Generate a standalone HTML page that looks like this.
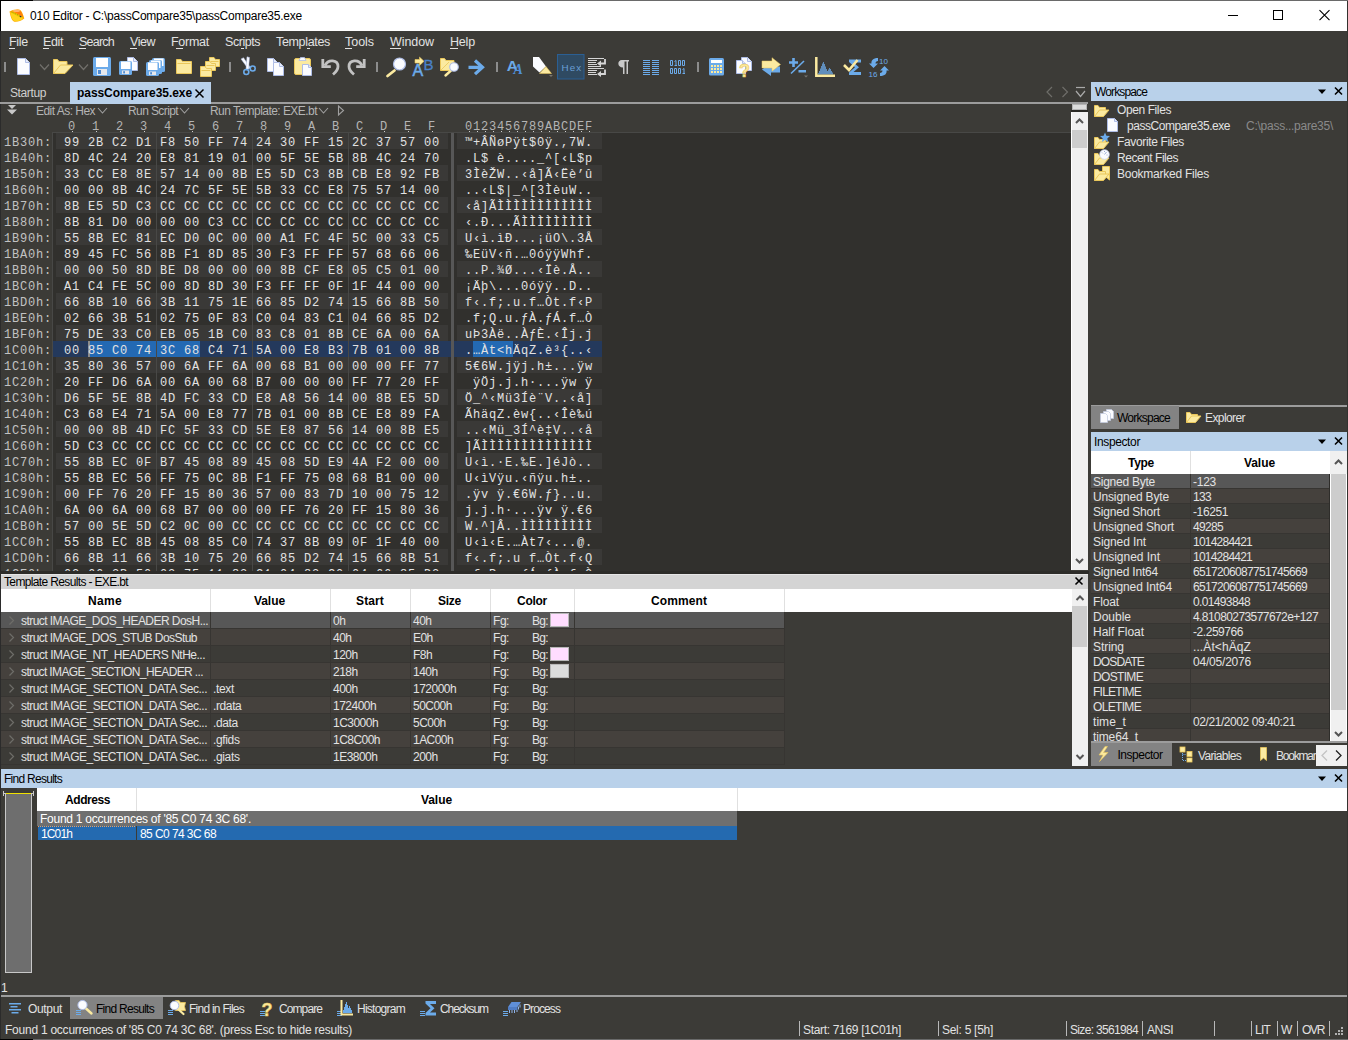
<!DOCTYPE html>
<html><head><meta charset="utf-8"><title>010 Editor</title><style>
html,body{margin:0;padding:0}
body{width:1348px;height:1040px;background:#3c3b37;position:relative;overflow:hidden;font-family:"Liberation Sans",sans-serif;font-size:12px}
div,span.t,svg{position:absolute}
div{box-sizing:border-box}
.t{white-space:pre;line-height:16px;height:16px}
.b{font-weight:bold}
.m{font-family:"Liberation Mono",monospace}
.f{font-family:"Liberation Serif",serif}
.clip{overflow:hidden}
</style></head><body>
<div style="left:0px;top:0px;width:1348px;height:1px;background:#6a6a6a;"></div>
<div style="left:0px;top:0px;width:33px;height:1px;background:#000;"></div>
<div style="left:1px;top:1px;width:1346px;height:30px;background:#fff;"></div>
<div style="left:0px;top:1px;width:1px;height:30px;background:#000;"></div>
<div style="left:0px;top:31px;width:1px;height:1009px;background:#2b2b2b;"></div>
<div style="left:1347px;top:1px;width:1px;height:1039px;background:#33322f;"></div>
<div style="left:0px;top:1039px;width:1348px;height:1px;background:#6a6a6a;"></div>
<div style="left:0px;top:1039px;width:33px;height:1px;background:#000;"></div>
<span class="t" style="left:30px;top:8px;color:#000;letter-spacing:-0.230px;">010 Editor - C:\passCompare35\passCompare35.exe</span>
<svg style="left:1220px;top:5px" width="120" height="22" viewBox="0 0 120 22"><g stroke="#000" stroke-width="1" fill="none" shape-rendering="crispEdges"><path d="M8 10.5H18"/><rect x="53.5" y="5.5" width="9" height="9"/></g><path d="M99.500 5.200l10 10M109.500 5.200l-10 10" stroke="#000" stroke-width="1.1" fill="none"/></svg>
<span class="t" style="left:9px;top:34px;color:#e2e2e2;font-size:12.5px;letter-spacing:-0.289px;">File</span>
<span class="t" style="left:43px;top:34px;color:#e2e2e2;font-size:12.5px;letter-spacing:-0.387px;">Edit</span>
<span class="t" style="left:79px;top:34px;color:#e2e2e2;font-size:12.5px;letter-spacing:-0.768px;">Search</span>
<span class="t" style="left:130px;top:34px;color:#e2e2e2;font-size:12.5px;letter-spacing:-0.469px;">View</span>
<span class="t" style="left:171px;top:34px;color:#e2e2e2;font-size:12.5px;letter-spacing:-0.266px;">Format</span>
<span class="t" style="left:225px;top:34px;color:#e2e2e2;font-size:12.5px;letter-spacing:-0.458px;">Scripts</span>
<span class="t" style="left:276px;top:34px;color:#e2e2e2;font-size:12.5px;letter-spacing:-0.332px;">Templates</span>
<span class="t" style="left:345px;top:34px;color:#e2e2e2;font-size:12.5px;letter-spacing:-0.037px;">Tools</span>
<span class="t" style="left:390px;top:34px;color:#e2e2e2;font-size:12.5px;letter-spacing:-0.078px;">Window</span>
<span class="t" style="left:450px;top:34px;color:#e2e2e2;font-size:12.5px;letter-spacing:-0.180px;">Help</span>
<div style="left:9px;top:48px;width:6px;height:1px;background:#e2e2e2;"></div>
<div style="left:43px;top:48px;width:6px;height:1px;background:#e2e2e2;"></div>
<div style="left:79px;top:48px;width:7px;height:1px;background:#e2e2e2;"></div>
<div style="left:130px;top:48px;width:7px;height:1px;background:#e2e2e2;"></div>
<div style="left:176px;top:48px;width:7px;height:1px;background:#e2e2e2;"></div>
<div style="left:241px;top:48px;width:3px;height:1px;background:#e2e2e2;"></div>
<div style="left:307px;top:48px;width:3px;height:1px;background:#e2e2e2;"></div>
<div style="left:345px;top:48px;width:7px;height:1px;background:#e2e2e2;"></div>
<div style="left:390px;top:48px;width:11px;height:1px;background:#e2e2e2;"></div>
<div style="left:450px;top:48px;width:8px;height:1px;background:#e2e2e2;"></div>
<svg style="left:0;top:52px" width="900" height="30" viewBox="0 52 900 30"><rect x="4" y="62" width="2" height="10" fill="#8c8c8c"/><path d="M17.5 58.5h8l4 4v12h-12z" fill="#fbfcff" stroke="#aebde6"/><path d="M25.5 58.5v4h4" fill="#e6ebfa" stroke="#aebde6"/><path d="M40 64.5l4.5 5 4.5-5" fill="none" stroke="#716f6b" stroke-width="1.2"/><path d="M53.5 73.5v-14h4l1.5 2h8v4" fill="#fbeaa0" stroke="#eac75a"/><path d="M53.5 73.5l7-8.5h12.5l-8 8.5z" fill="#fbeaa0" stroke="#eac75a"/><path d="M79 64.5l4.5 5 4.5-5" fill="none" stroke="#716f6b" stroke-width="1.2"/><rect x="93" y="57" width="18" height="19" rx="1.5" fill="#6cabea"/><rect x="96" y="58" width="12" height="9" fill="#fff"/><rect x="97" y="69" width="10" height="6" fill="#e6e8ec"/><rect x="98" y="70" width="3" height="4" fill="#4e8ad0"/><path d="M127.5 57.5h6l4 4v9h-10z" fill="#fbfcff" stroke="#aebde6"/><path d="M133.5 57.5v4h4" fill="#e6ebfa" stroke="#aebde6"/><rect x="119" y="61" width="13" height="14" rx="1.5" fill="#6cabea"/><rect x="121" y="61.5" width="9.5" height="7.5" fill="#fff"/><rect x="122" y="70.5" width="7" height="3.5" fill="#e6e8ec"/><rect x="123.2" y="71.2" width="1.8" height="2.200" fill="#4e8ad0"/><rect x="152" y="58" width="13" height="14" rx="1.5" fill="#6cabea"/><rect x="154" y="58.5" width="9.5" height="7.5" fill="#fff"/><rect x="149" y="60" width="13" height="14" rx="1.5" fill="#6cabea"/><rect x="151" y="60.5" width="9.5" height="7.5" fill="#fff"/><rect x="146" y="62" width="13" height="14" rx="1.5" fill="#6cabea"/><rect x="148" y="62.5" width="9.5" height="7.5" fill="#fff"/><rect x="149" y="71.5" width="7" height="3.5" fill="#e6e8ec"/><rect x="150.2" y="72.2" width="1.8" height="2.200" fill="#4e8ad0"/><path d="M176.5 59.5h4.5l1.5 2h9v12h-15z" fill="#fbeaa0" stroke="#eac75a"/><path d="M177.5 63.5h13" stroke="#eac75a" fill="none"/><path d="M209.5 57.5h4.5l1.5 2h4v7h-10z" fill="#fbeaa0" stroke="#eac75a"/><path d="M210.5 61.5h8" stroke="#eac75a" fill="none"/><path d="M205.5 61.5h4.5l1.5 2h4v7h-10z" fill="#fbeaa0" stroke="#eac75a"/><path d="M206.5 65.5h8" stroke="#eac75a" fill="none"/><path d="M200.5 66.5h4.5l1.5 2h5v8h-11z" fill="#fbeaa0" stroke="#eac75a"/><path d="M201.5 70.5h9" stroke="#eac75a" fill="none"/><rect x="229" y="62" width="2" height="10" fill="#8c8c8c"/><path d="M248 68l-1.5 2.200M249.5 67.5l1.5.6" stroke="#6cabea" stroke-width="1.6" fill="none"/><path d="M241 59l2.5-1.3 7 10-2 1.5z" fill="#fbfcff" stroke="#aebde6" stroke-width=".5"/><path d="M247 56.8l2.5.700-1 11.5-2.5 0z" fill="#fbfcff" stroke="#aebde6" stroke-width=".5"/><circle cx="246.3" cy="72" r="2.5" fill="none" stroke="#6cabea" stroke-width="1.6"/><circle cx="252.700" cy="68.5" r="2.5" fill="none" stroke="#6cabea" stroke-width="1.6"/><path d="M267.5 58.5h6l4 4v9h-10z" fill="#fbfcff" stroke="#aebde6"/><path d="M273.5 58.5v4h4" fill="#e6ebfa" stroke="#aebde6"/><path d="M273.5 62.5h6l4 4v9h-10z" fill="#fbfcff" stroke="#aebde6"/><path d="M279.5 62.5v4h4" fill="#e6ebfa" stroke="#aebde6"/><rect x="294.5" y="58.5" width="16" height="16" rx="1.5" fill="#fbeaa0" stroke="#eac75a"/><path d="M299 60.5l1.5-3h4l1.5 3z" fill="#fbfcff" stroke="#aebde6" stroke-width=".8"/><path d="M302.5 64.5h6l3 3v8h-9z" fill="#fbfcff" stroke="#aebde6"/><path d="M308.5 64.5v3h3" fill="#e6ebfa" stroke="#aebde6"/><g transform="translate(321 58)"><path d="M1.8 1v7.700h8" fill="none" stroke="#c2c2c2" stroke-width="2.8"/><path d="M4 7.5c3.5-7 13-5.5 13 1 0 3-2 5.5-5 8" fill="none" stroke="#c2c2c2" stroke-width="2.8"/></g><g transform="translate(366 58) scale(-1 1)"><path d="M1.8 1v7.700h8" fill="none" stroke="#c2c2c2" stroke-width="2.8"/><path d="M4 7.5c3.5-7 13-5.5 13 1 0 3-2 5.5-5 8" fill="none" stroke="#c2c2c2" stroke-width="2.8"/></g><rect x="376" y="62" width="2" height="10" fill="#8c8c8c"/><path d="M394.5 70.5l-7 5.5" stroke="#fbeaa0" stroke-width="2.8" stroke-linecap="round"/><circle cx="399.5" cy="64" r="6" fill="#fbfcff" stroke="#aebde6" stroke-width="1.2"/><text x="412.5" y="76" font-family="Liberation Sans" font-size="16" fill="#6cabea" stroke="#6cabea" stroke-width=".5">A</text><text x="423.5" y="70" font-family="Liberation Sans" font-size="15" fill="#4a82c8" stroke="#4a82c8" stroke-width=".3">B</text><path d="M415 59.5h4.5v-2.5l4.5 4.3-4.5 4.200v-2.5h-4.5z" fill="#fbeaa0" stroke="#eac75a" stroke-width=".6"/><path d="M440.5 70.5v-12h4l1.5 2h8v10z" fill="#fbeaa0" stroke="#eac75a"/><path d="M441 70l8-8" stroke="#eac75a" stroke-width=".8"/><path d="M451 70.5l-5.5 5" stroke="#fbeaa0" stroke-width="2.400" stroke-linecap="round"/><circle cx="454" cy="67" r="4.3" fill="#fbfcff" stroke="#aebde6" stroke-width="1.1"/><path d="M468.5 67.3h13M475 60.5l7.5 6.8-7.5 6.8" fill="none" stroke="#6cabea" stroke-width="3.200" stroke-linejoin="miter"/><rect x="496" y="62" width="2" height="10" fill="#8c8c8c"/><text x="506.8" y="71" font-family="Liberation Sans" font-weight="bold" font-size="15.5" fill="#6cabea">A</text><text x="513.5" y="74" font-family="Liberation Serif" font-style="italic" font-weight="bold" font-size="14" fill="#4f8fd8">A</text><path d="M533 57h6l7 9.5-6.5 6-6.5-6z" fill="#fbfcff"/><path d="M546 66.5l5.5 7h-12z" fill="#fbeaa0" stroke="#eac75a" stroke-width=".5"/><path d="M549 75h4l-2 2z" fill="#77756f"/><rect x="557.5" y="54.5" width="26.5" height="24.5" fill="#2f4a62" stroke="#2b5f93"/><text x="561.5" y="71" font-family="Liberation Sans" font-size="9.8" letter-spacing="1.100" fill="#6a9fd4">Hex</text><path d="M588 58.5H604M588 60.5H597M588 62.5H596M588 64.5H597M588 66.5H601M588 68.5H604M588 70.5H597M588 72.5H596M588 74.5H597" stroke="#d6d6d6" stroke-width="1" fill="none"/><path d="M605 59v4.5h-5M605 69.5v4.5h-5" stroke="#d6d6d6" stroke-width="1.8" fill="none"/><path d="M597 63.5l4-3v6zM597 74l4-3v6z" fill="#d6d6d6"/><path d="M622 60h7v1.5h-1v12.5h-1.5v-12.5h-2v12.5h-1.5v-6.5c-6 0-6-7.5-1-7.5z" fill="#c9c9c9"/><path d="M643 60.5h7M652 60.5h7M643 62.5h7M652 62.5h7M643 64.5h7M652 64.5h7M643 66.5h7M652 66.5h7M643 68.5h7M652 68.5h7M643 70.5h7M652 70.5h7M643 72.5h7M652 72.5h7M643 74.5h7M652 74.5h7" stroke="#6cabea" stroke-width="1" fill="none" shape-rendering="crispEdges"/><path d="M670.5 60.5h2v5h-2zM674.5 61.5l1.5-1v5.5M674.5 65.5h2.5M678.5 60.5h2v5h-2zM682.5 60.5h2v5h-2zM670.5 68.5h2v5h-2zM674.5 68.5h2v5h-2zM678.5 68.5h2v5h-2zM682.5 69.5l1.5-1v5.5M682.5 73.5h2.5" fill="none" stroke="#6cabea" stroke-width="1"/><rect x="697" y="62" width="2" height="10" fill="#8c8c8c"/><rect x="709" y="58" width="15" height="17.5" rx="1.5" fill="#6cabea"/><rect x="711" y="60" width="11" height="3" fill="#fff"/><rect x="711" y="65" width="2" height="2" fill="#fbeaa0"/><rect x="714" y="65" width="2" height="2" fill="#fbeaa0"/><rect x="717" y="65" width="2" height="2" fill="#fbeaa0"/><rect x="720" y="65" width="2" height="2" fill="#fbeaa0"/><rect x="711" y="68" width="2" height="2" fill="#fbeaa0"/><rect x="714" y="68" width="2" height="2" fill="#fbeaa0"/><rect x="717" y="68" width="2" height="2" fill="#fbeaa0"/><rect x="720" y="68" width="2" height="2" fill="#fbeaa0"/><rect x="711" y="71" width="2" height="2" fill="#fbeaa0"/><rect x="714" y="71" width="2" height="2" fill="#fbeaa0"/><rect x="717" y="71" width="2" height="2" fill="#fbeaa0"/><rect x="720" y="71" width="2" height="2" fill="#fbeaa0"/><path d="M741.5 57.5h6l4 4v9h-10z" fill="#fbfcff" stroke="#aebde6"/><path d="M747.5 57.5v4h4" fill="#e6ebfa" stroke="#aebde6"/><path d="M736.5 60.5h6l3 3v10h-9z" fill="#fbfcff" stroke="#aebde6"/><path d="M742.5 60.5v3h3" fill="#e6ebfa" stroke="#aebde6"/><text x="739" y="77" font-family="Liberation Sans" font-weight="bold" font-size="18" fill="#fbeaa0" stroke="#eac75a" stroke-width=".6">?</text><path d="M780 66.5h-9v-3.5l-9 6.5 9 6.5v-3.5h9z" fill="#6cabea"/><path d="M762 61h10v-3.3l8.5 6.8-8.5 6.8v-3.3h-10z" fill="#fbeaa0" stroke="#eac75a" stroke-width=".5"/><path d="M789 62.5h9M793.5 58v9M798.5 71.3h7.5" stroke="#6cabea" stroke-width="2.6" fill="none"/><path d="M791 73.5l13-12.5" stroke="#6cabea" stroke-width="1.6" fill="none"/><path d="M804 75.5h4l-2 2z" fill="#77756f"/><path d="M818.5 74.5V73M819.5 74.5V71M820.5 74.5V68.5M821.5 74.5V66M822.5 74.5V63.5M823.5 74.5V62M824.5 74.5V64M825.5 74.5V66.5M826.5 74.5V69M827.5 74.5V71M828.5 74.5V69.5M829.5 74.5V68M830.5 74.5V69M831.5 74.5V71M832.5 74.5V72.5" stroke="#6cabea" stroke-width=".75" fill="none"/><path d="M816.3 57v18.700H835" fill="none" stroke="#fbeaa0" stroke-width="2.5"/><path d="M849 59.5h12v3h-7.5l5.5 4.8-5.5 4.700h7.5v3h-12v-2.5l6-5.200-6-5.3z" fill="#6cabea"/><path d="M844 65l5 5 8.5-10" fill="none" stroke="#fbeaa0" stroke-width="2.6"/><path d="M878 58c-5 0-7 2.5-6.5 5.5h-2.5l4.5 4.5 4.5-4.5h-2.5c0-1.5 1-2.5 2.5-2.5z" fill="#6cabea"/><path d="M880 76c5 0 7-2.5 6.5-5.5h2.5l-4.5-4.5-4.5 4.5h2.5c0 1.5-1 2.5-2.5 2.5z" fill="#6cabea"/><text x="879" y="63.5" font-family="Liberation Sans" font-size="8" fill="#6cabea">10</text><text x="868.5" y="76.5" font-family="Liberation Sans" font-size="8" fill="#6cabea">16</text></svg>
<span class="t" style="left:10px;top:85px;color:#d0d0d0;letter-spacing:-0.386px;">Startup</span>
<div style="left:0px;top:102px;width:1088px;height:2px;background:#9c9c9c;"></div>
<div style="left:70px;top:82px;width:141px;height:22px;background:#b9d1ea;"></div>
<span class="t b" style="left:77px;top:85px;color:#000;letter-spacing:-0.063px;">passCompare35.exe</span>
<svg style="left:194px;top:88px" width="11" height="11"><path d="M1.5 1.5l8 8M9.5 1.5l-8 8" stroke="#000" stroke-width="1.5" fill="none"/></svg>
<svg style="left:1042px;top:84px" width="48" height="16" fill="none" stroke="#6e6d69" stroke-width="1.2"><path d="M10 3L5 8l5 5"/><path d="M20.500 3l5 5-5 5"/><path d="M34 3.5h9" stroke="#a9a9a9"/><path d="M34 7l4.5 5.5L43 7" stroke="#a9a9a9"/></svg>
<svg style="left:7px;top:105px" width="10" height="10" fill="#c8c8c8"><path d="M1 0h8L5 4zM0 4.5h10L5 9.5z"/></svg>
<span class="t" style="left:36px;top:103px;color:#b4b4b4;letter-spacing:-0.531px;">Edit As: Hex</span>
<span class="t" style="left:128px;top:103px;color:#b4b4b4;letter-spacing:-0.603px;">Run Script</span>
<span class="t" style="left:210px;top:103px;color:#b4b4b4;letter-spacing:-0.542px;">Run Template: EXE.bt</span>
<svg style="left:97px;top:105px" width="250" height="12" fill="none" stroke="#a0a0a0" stroke-width="1.1"><path d="M1 3l4.5 5L10 3"/><path d="M83 3l4.5 5L92 3"/><path d="M222 3l4.5 5L231 3"/><path d="M241.5 1v9l5-4.5z"/></svg>
<div style="left:52px;top:132px;width:1019px;height:1px;background:#484846;"></div>
<div style="left:52px;top:132px;width:1px;height:439px;background:#484846;"></div>
<div style="left:53px;top:133px;width:1018px;height:438px;background:#31302d;"></div>
<div style="left:56px;top:133px;width:392px;height:16px;background:#3a3937;"></div>
<div style="left:457px;top:133px;width:145px;height:16px;background:#3a3937;"></div>
<div style="left:56px;top:165px;width:392px;height:16px;background:#3a3937;"></div>
<div style="left:457px;top:165px;width:145px;height:16px;background:#3a3937;"></div>
<div style="left:56px;top:197px;width:392px;height:16px;background:#3a3937;"></div>
<div style="left:457px;top:197px;width:145px;height:16px;background:#3a3937;"></div>
<div style="left:56px;top:229px;width:392px;height:16px;background:#3a3937;"></div>
<div style="left:457px;top:229px;width:145px;height:16px;background:#3a3937;"></div>
<div style="left:56px;top:261px;width:392px;height:16px;background:#3a3937;"></div>
<div style="left:457px;top:261px;width:145px;height:16px;background:#3a3937;"></div>
<div style="left:56px;top:293px;width:392px;height:16px;background:#3a3937;"></div>
<div style="left:457px;top:293px;width:145px;height:16px;background:#3a3937;"></div>
<div style="left:56px;top:325px;width:392px;height:16px;background:#3a3937;"></div>
<div style="left:457px;top:325px;width:145px;height:16px;background:#3a3937;"></div>
<div style="left:53px;top:341px;width:398px;height:16px;background:#24395c;"></div>
<div style="left:454px;top:341px;width:148px;height:16px;background:#24395c;"></div>
<div style="left:88px;top:341px;width:112px;height:16px;background:#2369b3;"></div>
<div style="left:473px;top:341px;width:40px;height:16px;background:#2369b3;"></div>
<div style="left:88px;top:341px;width:2px;height:16px;background:#8c8c8c;"></div>
<div style="left:56px;top:357px;width:392px;height:16px;background:#3a3937;"></div>
<div style="left:457px;top:357px;width:145px;height:16px;background:#3a3937;"></div>
<div style="left:56px;top:389px;width:392px;height:16px;background:#3a3937;"></div>
<div style="left:457px;top:389px;width:145px;height:16px;background:#3a3937;"></div>
<div style="left:56px;top:421px;width:392px;height:16px;background:#3a3937;"></div>
<div style="left:457px;top:421px;width:145px;height:16px;background:#3a3937;"></div>
<div style="left:56px;top:453px;width:392px;height:16px;background:#3a3937;"></div>
<div style="left:457px;top:453px;width:145px;height:16px;background:#3a3937;"></div>
<div style="left:56px;top:485px;width:392px;height:16px;background:#3a3937;"></div>
<div style="left:457px;top:485px;width:145px;height:16px;background:#3a3937;"></div>
<div style="left:56px;top:517px;width:392px;height:16px;background:#3a3937;"></div>
<div style="left:457px;top:517px;width:145px;height:16px;background:#3a3937;"></div>
<div style="left:56px;top:549px;width:392px;height:16px;background:#3a3937;"></div>
<div style="left:457px;top:549px;width:145px;height:16px;background:#3a3937;"></div>
<div style="left:156px;top:133px;width:1px;height:438px;background:#484846;"></div>
<div style="left:252px;top:133px;width:1px;height:438px;background:#484846;"></div>
<div style="left:348px;top:133px;width:1px;height:438px;background:#484846;"></div>
<div style="left:451px;top:133px;width:3px;height:438px;background:#575757;"></div>
<span class="t m" style="left:68px;top:119.3px;color:#b4b4b4;letter-spacing:0.800px;">0</span>
<div style="left:72px;top:131px;width:1px;height:1px;background:#d0d0d0;"></div>
<div style="left:469px;top:131px;width:1px;height:1px;background:#d0d0d0;"></div>
<span class="t m" style="left:92px;top:119.3px;color:#b4b4b4;letter-spacing:0.800px;">1</span>
<div style="left:96px;top:131px;width:1px;height:1px;background:#d0d0d0;"></div>
<div style="left:477px;top:131px;width:1px;height:1px;background:#d0d0d0;"></div>
<span class="t m" style="left:116px;top:119.3px;color:#b4b4b4;letter-spacing:0.800px;">2</span>
<div style="left:120px;top:131px;width:1px;height:1px;background:#d0d0d0;"></div>
<div style="left:485px;top:131px;width:1px;height:1px;background:#d0d0d0;"></div>
<span class="t m" style="left:140px;top:119.3px;color:#b4b4b4;letter-spacing:0.800px;">3</span>
<div style="left:144px;top:131px;width:1px;height:1px;background:#d0d0d0;"></div>
<div style="left:493px;top:131px;width:1px;height:1px;background:#d0d0d0;"></div>
<span class="t m" style="left:164px;top:119.3px;color:#b4b4b4;letter-spacing:0.800px;">4</span>
<div style="left:168px;top:131px;width:1px;height:1px;background:#d0d0d0;"></div>
<div style="left:501px;top:131px;width:1px;height:1px;background:#d0d0d0;"></div>
<span class="t m" style="left:188px;top:119.3px;color:#b4b4b4;letter-spacing:0.800px;">5</span>
<div style="left:192px;top:131px;width:1px;height:1px;background:#d0d0d0;"></div>
<div style="left:509px;top:131px;width:1px;height:1px;background:#d0d0d0;"></div>
<span class="t m" style="left:212px;top:119.3px;color:#b4b4b4;letter-spacing:0.800px;">6</span>
<div style="left:216px;top:131px;width:1px;height:1px;background:#d0d0d0;"></div>
<div style="left:517px;top:131px;width:1px;height:1px;background:#d0d0d0;"></div>
<span class="t m" style="left:236px;top:119.3px;color:#b4b4b4;letter-spacing:0.800px;">7</span>
<div style="left:240px;top:131px;width:1px;height:1px;background:#d0d0d0;"></div>
<div style="left:525px;top:131px;width:1px;height:1px;background:#d0d0d0;"></div>
<span class="t m" style="left:260px;top:119.3px;color:#b4b4b4;letter-spacing:0.800px;">8</span>
<div style="left:264px;top:131px;width:1px;height:1px;background:#d0d0d0;"></div>
<div style="left:533px;top:131px;width:1px;height:1px;background:#d0d0d0;"></div>
<span class="t m" style="left:284px;top:119.3px;color:#b4b4b4;letter-spacing:0.800px;">9</span>
<div style="left:288px;top:131px;width:1px;height:1px;background:#d0d0d0;"></div>
<div style="left:541px;top:131px;width:1px;height:1px;background:#d0d0d0;"></div>
<span class="t m" style="left:308px;top:119.3px;color:#b4b4b4;letter-spacing:0.800px;">A</span>
<div style="left:312px;top:131px;width:1px;height:1px;background:#d0d0d0;"></div>
<div style="left:549px;top:131px;width:1px;height:1px;background:#d0d0d0;"></div>
<span class="t m" style="left:332px;top:119.3px;color:#b4b4b4;letter-spacing:0.800px;">B</span>
<div style="left:336px;top:131px;width:1px;height:1px;background:#d0d0d0;"></div>
<div style="left:557px;top:131px;width:1px;height:1px;background:#d0d0d0;"></div>
<span class="t m" style="left:356px;top:119.3px;color:#b4b4b4;letter-spacing:0.800px;">C</span>
<div style="left:360px;top:131px;width:1px;height:1px;background:#d0d0d0;"></div>
<div style="left:565px;top:131px;width:1px;height:1px;background:#d0d0d0;"></div>
<span class="t m" style="left:380px;top:119.3px;color:#b4b4b4;letter-spacing:0.800px;">D</span>
<div style="left:384px;top:131px;width:1px;height:1px;background:#d0d0d0;"></div>
<div style="left:573px;top:131px;width:1px;height:1px;background:#d0d0d0;"></div>
<span class="t m" style="left:404px;top:119.3px;color:#b4b4b4;letter-spacing:0.800px;">E</span>
<div style="left:408px;top:131px;width:1px;height:1px;background:#d0d0d0;"></div>
<div style="left:581px;top:131px;width:1px;height:1px;background:#d0d0d0;"></div>
<span class="t m" style="left:428px;top:119.3px;color:#b4b4b4;letter-spacing:0.800px;">F</span>
<div style="left:432px;top:131px;width:1px;height:1px;background:#d0d0d0;"></div>
<div style="left:589px;top:131px;width:1px;height:1px;background:#d0d0d0;"></div>
<span class="t m" style="left:465px;top:119.3px;color:#b4b4b4;letter-spacing:0.800px;">0123456789ABCDEF</span>
<div class="clip" style="left:0;top:133px;width:1071px;height:438px">
<span class="t m" style="left:4px;top:1.5999999999999996px;color:#c2c2c2;letter-spacing:0.800px;">1B30h:</span>
<span class="t m" style="left:64px;top:1.5999999999999996px;color:#e2e2e2;letter-spacing:0.800px;">99 2B C2 D1 F8 50 FF 74 24 30 FF 15 2C 37 57 00</span>
<span class="t m" style="left:465px;top:1.5999999999999996px;color:#e2e2e2;letter-spacing:0.800px;">™+ÂÑøPÿt$0ÿ.,7W.</span>
<span class="t m" style="left:4px;top:17.6px;color:#c2c2c2;letter-spacing:0.800px;">1B40h:</span>
<span class="t m" style="left:64px;top:17.6px;color:#e2e2e2;letter-spacing:0.800px;">8D 4C 24 20 E8 81 19 01 00 5F 5E 5B 8B 4C 24 70</span>
<span class="t m" style="left:465px;top:17.6px;color:#e2e2e2;letter-spacing:0.800px;">.L$ è...._^[‹L$p</span>
<span class="t m" style="left:4px;top:33.6px;color:#c2c2c2;letter-spacing:0.800px;">1B50h:</span>
<span class="t m" style="left:64px;top:33.6px;color:#e2e2e2;letter-spacing:0.800px;">33 CC E8 8E 57 14 00 8B E5 5D C3 8B CB E8 92 FB</span>
<span class="t m" style="left:465px;top:33.6px;color:#e2e2e2;letter-spacing:0.800px;">3ÌèŽW..‹å]Ã‹Ëè’û</span>
<span class="t m" style="left:4px;top:49.6px;color:#c2c2c2;letter-spacing:0.800px;">1B60h:</span>
<span class="t m" style="left:64px;top:49.6px;color:#e2e2e2;letter-spacing:0.800px;">00 00 8B 4C 24 7C 5F 5E 5B 33 CC E8 75 57 14 00</span>
<span class="t m" style="left:465px;top:49.6px;color:#e2e2e2;letter-spacing:0.800px;">..‹L$|_^[3ÌèuW..</span>
<span class="t m" style="left:4px;top:65.6px;color:#c2c2c2;letter-spacing:0.800px;">1B70h:</span>
<span class="t m" style="left:64px;top:65.6px;color:#e2e2e2;letter-spacing:0.800px;">8B E5 5D C3 CC CC CC CC CC CC CC CC CC CC CC CC</span>
<span class="t m" style="left:465px;top:65.6px;color:#e2e2e2;letter-spacing:0.800px;">‹å]ÃÌÌÌÌÌÌÌÌÌÌÌÌ</span>
<span class="t m" style="left:4px;top:81.6px;color:#c2c2c2;letter-spacing:0.800px;">1B80h:</span>
<span class="t m" style="left:64px;top:81.6px;color:#e2e2e2;letter-spacing:0.800px;">8B 81 D0 00 00 00 C3 CC CC CC CC CC CC CC CC CC</span>
<span class="t m" style="left:465px;top:81.6px;color:#e2e2e2;letter-spacing:0.800px;">‹.Ð...ÃÌÌÌÌÌÌÌÌÌ</span>
<span class="t m" style="left:4px;top:97.6px;color:#c2c2c2;letter-spacing:0.800px;">1B90h:</span>
<span class="t m" style="left:64px;top:97.6px;color:#e2e2e2;letter-spacing:0.800px;">55 8B EC 81 EC D0 0C 00 00 A1 FC 4F 5C 00 33 C5</span>
<span class="t m" style="left:465px;top:97.6px;color:#e2e2e2;letter-spacing:0.800px;">U‹ì.ìÐ...¡üO\.3Å</span>
<span class="t m" style="left:4px;top:113.6px;color:#c2c2c2;letter-spacing:0.800px;">1BA0h:</span>
<span class="t m" style="left:64px;top:113.6px;color:#e2e2e2;letter-spacing:0.800px;">89 45 FC 56 8B F1 8D 85 30 F3 FF FF 57 68 66 06</span>
<span class="t m" style="left:465px;top:113.6px;color:#e2e2e2;letter-spacing:0.800px;">‰EüV‹ñ.…0óÿÿWhf.</span>
<span class="t m" style="left:4px;top:129.6px;color:#c2c2c2;letter-spacing:0.800px;">1BB0h:</span>
<span class="t m" style="left:64px;top:129.6px;color:#e2e2e2;letter-spacing:0.800px;">00 00 50 8D BE D8 00 00 00 8B CF E8 05 C5 01 00</span>
<span class="t m" style="left:465px;top:129.6px;color:#e2e2e2;letter-spacing:0.800px;">..P.¾Ø...‹Ïè.Å..</span>
<span class="t m" style="left:4px;top:145.6px;color:#c2c2c2;letter-spacing:0.800px;">1BC0h:</span>
<span class="t m" style="left:64px;top:145.6px;color:#e2e2e2;letter-spacing:0.800px;">A1 C4 FE 5C 00 8D 8D 30 F3 FF FF 0F 1F 44 00 00</span>
<span class="t m" style="left:465px;top:145.6px;color:#e2e2e2;letter-spacing:0.800px;">¡Äþ\...0óÿÿ..D..</span>
<span class="t m" style="left:4px;top:161.6px;color:#c2c2c2;letter-spacing:0.800px;">1BD0h:</span>
<span class="t m" style="left:64px;top:161.6px;color:#e2e2e2;letter-spacing:0.800px;">66 8B 10 66 3B 11 75 1E 66 85 D2 74 15 66 8B 50</span>
<span class="t m" style="left:465px;top:161.6px;color:#e2e2e2;letter-spacing:0.800px;">f‹.f;.u.f…Òt.f‹P</span>
<span class="t m" style="left:4px;top:177.6px;color:#c2c2c2;letter-spacing:0.800px;">1BE0h:</span>
<span class="t m" style="left:64px;top:177.6px;color:#e2e2e2;letter-spacing:0.800px;">02 66 3B 51 02 75 0F 83 C0 04 83 C1 04 66 85 D2</span>
<span class="t m" style="left:465px;top:177.6px;color:#e2e2e2;letter-spacing:0.800px;">.f;Q.u.ƒÀ.ƒÁ.f…Ò</span>
<span class="t m" style="left:4px;top:193.6px;color:#c2c2c2;letter-spacing:0.800px;">1BF0h:</span>
<span class="t m" style="left:64px;top:193.6px;color:#e2e2e2;letter-spacing:0.800px;">75 DE 33 C0 EB 05 1B C0 83 C8 01 8B CE 6A 00 6A</span>
<span class="t m" style="left:465px;top:193.6px;color:#e2e2e2;letter-spacing:0.800px;">uÞ3Àë..ÀƒÈ.‹Îj.j</span>
<span class="t m" style="left:4px;top:209.6px;color:#c2c2c2;letter-spacing:0.800px;">1C00h:</span>
<span class="t m" style="left:64px;top:209.6px;color:#e2e2e2;letter-spacing:0.800px;">00 85 C0 74 3C 68 C4 71 5A 00 E8 B3 7B 01 00 8B</span>
<span class="t m" style="left:465px;top:209.6px;color:#e2e2e2;letter-spacing:0.800px;">.…Àt&lt;hÄqZ.è³{..‹</span>
<span class="t m" style="left:4px;top:225.6px;color:#c2c2c2;letter-spacing:0.800px;">1C10h:</span>
<span class="t m" style="left:64px;top:225.6px;color:#e2e2e2;letter-spacing:0.800px;">35 80 36 57 00 6A FF 6A 00 68 B1 00 00 00 FF 77</span>
<span class="t m" style="left:465px;top:225.6px;color:#e2e2e2;letter-spacing:0.800px;">5€6W.jÿj.h±...ÿw</span>
<span class="t m" style="left:4px;top:241.6px;color:#c2c2c2;letter-spacing:0.800px;">1C20h:</span>
<span class="t m" style="left:64px;top:241.6px;color:#e2e2e2;letter-spacing:0.800px;">20 FF D6 6A 00 6A 00 68 B7 00 00 00 FF 77 20 FF</span>
<span class="t m" style="left:465px;top:241.6px;color:#e2e2e2;letter-spacing:0.800px;"> ÿÖj.j.h·...ÿw ÿ</span>
<span class="t m" style="left:4px;top:257.6px;color:#c2c2c2;letter-spacing:0.800px;">1C30h:</span>
<span class="t m" style="left:64px;top:257.6px;color:#e2e2e2;letter-spacing:0.800px;">D6 5F 5E 8B 4D FC 33 CD E8 A8 56 14 00 8B E5 5D</span>
<span class="t m" style="left:465px;top:257.6px;color:#e2e2e2;letter-spacing:0.800px;">Ö_^‹Mü3Íè¨V..‹å]</span>
<span class="t m" style="left:4px;top:273.6px;color:#c2c2c2;letter-spacing:0.800px;">1C40h:</span>
<span class="t m" style="left:64px;top:273.6px;color:#e2e2e2;letter-spacing:0.800px;">C3 68 E4 71 5A 00 E8 77 7B 01 00 8B CE E8 89 FA</span>
<span class="t m" style="left:465px;top:273.6px;color:#e2e2e2;letter-spacing:0.800px;">ÃhäqZ.èw{..‹Îè‰ú</span>
<span class="t m" style="left:4px;top:289.6px;color:#c2c2c2;letter-spacing:0.800px;">1C50h:</span>
<span class="t m" style="left:64px;top:289.6px;color:#e2e2e2;letter-spacing:0.800px;">00 00 8B 4D FC 5F 33 CD 5E E8 87 56 14 00 8B E5</span>
<span class="t m" style="left:465px;top:289.6px;color:#e2e2e2;letter-spacing:0.800px;">..‹Mü_3Í^è‡V..‹å</span>
<span class="t m" style="left:4px;top:305.6px;color:#c2c2c2;letter-spacing:0.800px;">1C60h:</span>
<span class="t m" style="left:64px;top:305.6px;color:#e2e2e2;letter-spacing:0.800px;">5D C3 CC CC CC CC CC CC CC CC CC CC CC CC CC CC</span>
<span class="t m" style="left:465px;top:305.6px;color:#e2e2e2;letter-spacing:0.800px;">]ÃÌÌÌÌÌÌÌÌÌÌÌÌÌÌ</span>
<span class="t m" style="left:4px;top:321.6px;color:#c2c2c2;letter-spacing:0.800px;">1C70h:</span>
<span class="t m" style="left:64px;top:321.6px;color:#e2e2e2;letter-spacing:0.800px;">55 8B EC 0F B7 45 08 89 45 08 5D E9 4A F2 00 00</span>
<span class="t m" style="left:465px;top:321.6px;color:#e2e2e2;letter-spacing:0.800px;">U‹ì.·E.‰E.]éJò..</span>
<span class="t m" style="left:4px;top:337.6px;color:#c2c2c2;letter-spacing:0.800px;">1C80h:</span>
<span class="t m" style="left:64px;top:337.6px;color:#e2e2e2;letter-spacing:0.800px;">55 8B EC 56 FF 75 0C 8B F1 FF 75 08 68 B1 00 00</span>
<span class="t m" style="left:465px;top:337.6px;color:#e2e2e2;letter-spacing:0.800px;">U‹ìVÿu.‹ñÿu.h±..</span>
<span class="t m" style="left:4px;top:353.6px;color:#c2c2c2;letter-spacing:0.800px;">1C90h:</span>
<span class="t m" style="left:64px;top:353.6px;color:#e2e2e2;letter-spacing:0.800px;">00 FF 76 20 FF 15 80 36 57 00 83 7D 10 00 75 12</span>
<span class="t m" style="left:465px;top:353.6px;color:#e2e2e2;letter-spacing:0.800px;">.ÿv ÿ.€6W.ƒ}..u.</span>
<span class="t m" style="left:4px;top:369.6px;color:#c2c2c2;letter-spacing:0.800px;">1CA0h:</span>
<span class="t m" style="left:64px;top:369.6px;color:#e2e2e2;letter-spacing:0.800px;">6A 00 6A 00 68 B7 00 00 00 FF 76 20 FF 15 80 36</span>
<span class="t m" style="left:465px;top:369.6px;color:#e2e2e2;letter-spacing:0.800px;">j.j.h·...ÿv ÿ.€6</span>
<span class="t m" style="left:4px;top:385.6px;color:#c2c2c2;letter-spacing:0.800px;">1CB0h:</span>
<span class="t m" style="left:64px;top:385.6px;color:#e2e2e2;letter-spacing:0.800px;">57 00 5E 5D C2 0C 00 CC CC CC CC CC CC CC CC CC</span>
<span class="t m" style="left:465px;top:385.6px;color:#e2e2e2;letter-spacing:0.800px;">W.^]Â..ÌÌÌÌÌÌÌÌÌ</span>
<span class="t m" style="left:4px;top:401.6px;color:#c2c2c2;letter-spacing:0.800px;">1CC0h:</span>
<span class="t m" style="left:64px;top:401.6px;color:#e2e2e2;letter-spacing:0.800px;">55 8B EC 8B 45 08 85 C0 74 37 8B 09 0F 1F 40 00</span>
<span class="t m" style="left:465px;top:401.6px;color:#e2e2e2;letter-spacing:0.800px;">U‹ì‹E.…Àt7‹...@.</span>
<span class="t m" style="left:4px;top:417.6px;color:#c2c2c2;letter-spacing:0.800px;">1CD0h:</span>
<span class="t m" style="left:64px;top:417.6px;color:#e2e2e2;letter-spacing:0.800px;">66 8B 11 66 3B 10 75 20 66 85 D2 74 15 66 8B 51</span>
<span class="t m" style="left:465px;top:417.6px;color:#e2e2e2;letter-spacing:0.800px;">f‹.f;.u f…Òt.f‹Q</span>
<span class="t m" style="left:4px;top:433.6px;color:#c2c2c2;letter-spacing:0.800px;">1CE0h:</span>
<span class="t m" style="left:64px;top:433.6px;color:#e2e2e2;letter-spacing:0.800px;">02 66 3B 50 02 75 11 83 C1 04 83 C0 04 66 85 D2</span>
<span class="t m" style="left:465px;top:433.6px;color:#e2e2e2;letter-spacing:0.800px;">.f;P.u.ƒÁ.ƒÀ.f…Ò</span>
</div>
<div style="left:1072px;top:104px;width:15px;height:6px;background:#dcdcdc;border:1px solid #b5b5b5"></div>
<div style="left:1071px;top:110px;width:17px;height:2px;background:#2a2925;"></div>
<div style="left:1071px;top:112px;width:17px;height:458px;background:#f0f0f0;border-left:1px solid #fff"></div>
<div style="left:1072px;top:130px;width:15px;height:18px;background:#cdcdcd;"></div>
<svg style="left:1071px;top:112px" width="17" height="458" fill="none" stroke="#555" stroke-width="2"><path d="M5 11l3.5-3.5L12 11"/><path d="M5 447l3.500 3.500L12 447"/></svg>
<div style="left:1091px;top:82px;width:256px;height:19px;background:#b9d1ea;"></div>
<span class="t" style="left:1095px;top:84px;color:#000;letter-spacing:-0.868px;">Workspace</span>
<svg style="left:1317px;top:86px" width="32" height="12"><path d="M1 3.5h8L5 8z" fill="#000"/><path d="M18 1.5l7 7M25 1.5l-7 7" stroke="#000" stroke-width="1.6" fill="none"/></svg>
<span class="t" style="left:1117px;top:102px;color:#e2e2e2;letter-spacing:-0.403px;">Open Files</span>
<span class="t" style="left:1127px;top:118px;color:#e2e2e2;letter-spacing:-0.455px;">passCompare35.exe</span>
<span class="t" style="left:1246px;top:118px;color:#8a8a8a;letter-spacing:-0.258px;">C:\pass...pare35\</span>
<span class="t" style="left:1117px;top:134px;color:#e2e2e2;letter-spacing:-0.359px;">Favorite Files</span>
<span class="t" style="left:1117px;top:150px;color:#e2e2e2;letter-spacing:-0.475px;">Recent Files</span>
<span class="t" style="left:1117px;top:166px;color:#e2e2e2;letter-spacing:-0.253px;">Bookmarked Files</span>
<div style="left:1091px;top:405px;width:256px;height:2px;background:#9c9c9c;"></div>
<div style="left:1091px;top:406px;width:88px;height:23px;background:#838383;"></div>
<span class="t" style="left:1117px;top:410px;color:#000;letter-spacing:-0.757px;">Workspace</span>
<span class="t" style="left:1205px;top:410px;color:#e2e2e2;letter-spacing:-0.586px;">Explorer</span>
<div style="left:1091px;top:432px;width:256px;height:19px;background:#b9d1ea;"></div>
<span class="t" style="left:1094px;top:434px;color:#000;letter-spacing:-0.373px;">Inspector</span>
<svg style="left:1317px;top:436px" width="32" height="12"><path d="M1 3.5h8L5 8z" fill="#000"/><path d="M18 1.5l7 7M25 1.5l-7 7" stroke="#000" stroke-width="1.6" fill="none"/></svg>
<div style="left:1091px;top:451px;width:239px;height:23px;background:#fff;"></div>
<div style="left:1190px;top:451px;width:1px;height:23px;background:#e0e0e0;"></div>
<span class="t b" style="left:1128px;top:455px;color:#000;letter-spacing:-0.281px;">Type</span>
<span class="t b" style="left:1244px;top:455px;color:#000;letter-spacing:-0.072px;">Value</span>
<div class="clip" style="left:1091px;top:474px;width:239px;height:267px">
<div style="left:0px;top:0px;width:239px;height:15px;background:#575757;"></div>
<div style="left:0px;top:14px;width:239px;height:1px;background:#373532;"></div>
<div style="left:99px;top:0px;width:1px;height:15px;background:#373532;"></div>
<span class="t" style="left:2px;top:0px;color:#e2e2e2;letter-spacing:-0.247px;">Signed Byte</span>
<span class="t" style="left:102px;top:0px;color:#e2e2e2;letter-spacing:-0.258px;">-123</span>
<div style="left:0px;top:15px;width:239px;height:15px;background:#45413d;"></div>
<div style="left:0px;top:29px;width:239px;height:1px;background:#373532;"></div>
<div style="left:99px;top:15px;width:1px;height:15px;background:#373532;"></div>
<span class="t" style="left:2px;top:15px;color:#e2e2e2;letter-spacing:-0.157px;">Unsigned Byte</span>
<span class="t" style="left:102px;top:15px;color:#e2e2e2;letter-spacing:-0.677px;">133</span>
<div style="left:0px;top:30px;width:239px;height:15px;background:#3c3b37;"></div>
<div style="left:0px;top:44px;width:239px;height:1px;background:#373532;"></div>
<div style="left:99px;top:30px;width:1px;height:15px;background:#373532;"></div>
<span class="t" style="left:2px;top:30px;color:#e2e2e2;letter-spacing:-0.199px;">Signed Short</span>
<span class="t" style="left:102px;top:30px;color:#e2e2e2;letter-spacing:-0.396px;">-16251</span>
<div style="left:0px;top:45px;width:239px;height:15px;background:#45413d;"></div>
<div style="left:0px;top:59px;width:239px;height:1px;background:#373532;"></div>
<div style="left:99px;top:45px;width:1px;height:15px;background:#373532;"></div>
<span class="t" style="left:2px;top:45px;color:#e2e2e2;letter-spacing:-0.123px;">Unsigned Short</span>
<span class="t" style="left:102px;top:45px;color:#e2e2e2;letter-spacing:-0.675px;">49285</span>
<div style="left:0px;top:60px;width:239px;height:15px;background:#3c3b37;"></div>
<div style="left:0px;top:74px;width:239px;height:1px;background:#373532;"></div>
<div style="left:99px;top:60px;width:1px;height:15px;background:#373532;"></div>
<span class="t" style="left:2px;top:60px;color:#e2e2e2;letter-spacing:-0.105px;">Signed Int</span>
<span class="t" style="left:102px;top:60px;color:#e2e2e2;letter-spacing:-0.775px;">1014284421</span>
<div style="left:0px;top:75px;width:239px;height:15px;background:#45413d;"></div>
<div style="left:0px;top:89px;width:239px;height:1px;background:#373532;"></div>
<div style="left:99px;top:75px;width:1px;height:15px;background:#373532;"></div>
<span class="t" style="left:2px;top:75px;color:#e2e2e2;letter-spacing:-0.033px;">Unsigned Int</span>
<span class="t" style="left:102px;top:75px;color:#e2e2e2;letter-spacing:-0.775px;">1014284421</span>
<div style="left:0px;top:90px;width:239px;height:15px;background:#3c3b37;"></div>
<div style="left:0px;top:104px;width:239px;height:1px;background:#373532;"></div>
<div style="left:99px;top:90px;width:1px;height:15px;background:#373532;"></div>
<span class="t" style="left:2px;top:90px;color:#e2e2e2;letter-spacing:-0.199px;">Signed Int64</span>
<span class="t" style="left:102px;top:90px;color:#e2e2e2;letter-spacing:-0.674px;">6517206087751745669</span>
<div style="left:0px;top:105px;width:239px;height:15px;background:#45413d;"></div>
<div style="left:0px;top:119px;width:239px;height:1px;background:#373532;"></div>
<div style="left:99px;top:105px;width:1px;height:15px;background:#373532;"></div>
<span class="t" style="left:2px;top:105px;color:#e2e2e2;letter-spacing:-0.124px;">Unsigned Int64</span>
<span class="t" style="left:102px;top:105px;color:#e2e2e2;letter-spacing:-0.674px;">6517206087751745669</span>
<div style="left:0px;top:120px;width:239px;height:15px;background:#3c3b37;"></div>
<div style="left:0px;top:134px;width:239px;height:1px;background:#373532;"></div>
<div style="left:99px;top:120px;width:1px;height:15px;background:#373532;"></div>
<span class="t" style="left:2px;top:120px;color:#e2e2e2;letter-spacing:-0.138px;">Float</span>
<span class="t" style="left:102px;top:120px;color:#e2e2e2;letter-spacing:-0.641px;">0.01493848</span>
<div style="left:0px;top:135px;width:239px;height:15px;background:#45413d;"></div>
<div style="left:0px;top:149px;width:239px;height:1px;background:#373532;"></div>
<div style="left:99px;top:135px;width:1px;height:15px;background:#373532;"></div>
<span class="t" style="left:2px;top:135px;color:#e2e2e2;letter-spacing:-0.005px;">Double</span>
<span class="t" style="left:102px;top:135px;color:#e2e2e2;letter-spacing:-0.579px;">4.81080273577672e+127</span>
<div style="left:0px;top:150px;width:239px;height:15px;background:#3c3b37;"></div>
<div style="left:0px;top:164px;width:239px;height:1px;background:#373532;"></div>
<div style="left:99px;top:150px;width:1px;height:15px;background:#373532;"></div>
<span class="t" style="left:2px;top:150px;color:#e2e2e2;letter-spacing:-0.036px;">Half Float</span>
<span class="t" style="left:102px;top:150px;color:#e2e2e2;letter-spacing:-0.450px;">-2.259766</span>
<div style="left:0px;top:165px;width:239px;height:15px;background:#45413d;"></div>
<div style="left:0px;top:179px;width:239px;height:1px;background:#373532;"></div>
<div style="left:99px;top:165px;width:1px;height:15px;background:#373532;"></div>
<span class="t" style="left:2px;top:165px;color:#e2e2e2;letter-spacing:-0.060px;">String</span>
<span class="t" style="left:102px;top:165px;color:#e2e2e2;letter-spacing:0.097px;">...Àt&lt;hÄqZ</span>
<div style="left:0px;top:180px;width:239px;height:15px;background:#3c3b37;"></div>
<div style="left:0px;top:194px;width:239px;height:1px;background:#373532;"></div>
<div style="left:99px;top:180px;width:1px;height:15px;background:#373532;"></div>
<span class="t" style="left:2px;top:180px;color:#e2e2e2;letter-spacing:-0.875px;">DOSDATE</span>
<span class="t" style="left:102px;top:180px;color:#e2e2e2;letter-spacing:-0.206px;">04/05/2076</span>
<div style="left:0px;top:195px;width:239px;height:15px;background:#45413d;"></div>
<div style="left:0px;top:209px;width:239px;height:1px;background:#373532;"></div>
<div style="left:99px;top:195px;width:1px;height:15px;background:#373532;"></div>
<span class="t" style="left:2px;top:195px;color:#e2e2e2;letter-spacing:-0.667px;">DOSTIME</span>
<div style="left:0px;top:210px;width:239px;height:15px;background:#3c3b37;"></div>
<div style="left:0px;top:224px;width:239px;height:1px;background:#373532;"></div>
<div style="left:99px;top:210px;width:1px;height:15px;background:#373532;"></div>
<span class="t" style="left:2px;top:210px;color:#e2e2e2;letter-spacing:-0.752px;">FILETIME</span>
<div style="left:0px;top:225px;width:239px;height:15px;background:#45413d;"></div>
<div style="left:0px;top:239px;width:239px;height:1px;background:#373532;"></div>
<div style="left:99px;top:225px;width:1px;height:15px;background:#373532;"></div>
<span class="t" style="left:2px;top:225px;color:#e2e2e2;letter-spacing:-0.670px;">OLETIME</span>
<div style="left:0px;top:240px;width:239px;height:15px;background:#3c3b37;"></div>
<div style="left:0px;top:254px;width:239px;height:1px;background:#373532;"></div>
<div style="left:99px;top:240px;width:1px;height:15px;background:#373532;"></div>
<span class="t" style="left:2px;top:240px;color:#e2e2e2;letter-spacing:0.052px;">time_t</span>
<span class="t" style="left:102px;top:240px;color:#e2e2e2;letter-spacing:-0.427px;">02/21/2002 09:40:21</span>
<div style="left:0px;top:255px;width:239px;height:15px;background:#45413d;"></div>
<div style="left:0px;top:269px;width:239px;height:1px;background:#373532;"></div>
<div style="left:99px;top:255px;width:1px;height:15px;background:#373532;"></div>
<span class="t" style="left:2px;top:255px;color:#e2e2e2;letter-spacing:-0.129px;">time64_t</span>
</div>
<div style="left:1330px;top:451px;width:17px;height:290px;background:#f0f0f0;"></div>
<div style="left:1329px;top:474px;width:1px;height:267px;background:#2e2d2a;"></div>
<div style="left:1330px;top:474px;width:1px;height:267px;background:#fff;"></div>
<div style="left:1346px;top:474px;width:1px;height:267px;background:#fff;"></div>
<div style="left:1331px;top:474px;width:15px;height:236px;background:#cdcdcd;"></div>
<svg style="left:1330px;top:451px" width="17" height="290" fill="none" stroke="#555" stroke-width="2"><path d="M5 13l3.5-3.5L12 13"/><path d="M5 281l3.5 3.5L12 281"/></svg>
<div style="left:1091px;top:741px;width:256px;height:2px;background:#9c9c9c;"></div>
<div style="left:1091px;top:743px;width:81px;height:23px;background:#838383;"></div>
<span class="t" style="left:1117.5px;top:747px;color:#000;letter-spacing:-0.484px;">Inspector</span>
<span class="t" style="left:1198px;top:748px;color:#e2e2e2;letter-spacing:-0.682px;">Variables</span>
<div class="clip" style="left:1270px;top:746px;width:46px;height:20px">
<span class="t" style="left:6px;top:2px;color:#e2e2e2;letter-spacing:-1.219px;">Bookmar</span>
</div>
<div style="left:1316px;top:745px;width:31px;height:21px;background:#f0f0f0;"></div>
<svg style="left:1316px;top:745px" width="31" height="21" fill="none" stroke-width="1.3"><path d="M11 5.5l-5 5 5 5" stroke="#c4c4c4"/><path d="M20 5.5l5 5-5 5" stroke="#222"/></svg>
<div style="left:0px;top:571px;width:1089px;height:3px;background:#2d2c29;"></div>
<div style="left:1px;top:574px;width:1087px;height:15px;background:#d4d4d4;"></div>
<div style="left:1px;top:574px;width:1087px;height:1px;background:#e6e6e6;"></div>
<span class="t" style="left:4px;top:574px;color:#000;letter-spacing:-0.642px;">Template Results - EXE.bt</span>
<svg style="left:1074px;top:576px" width="10" height="10"><path d="M1.5 1.5l7 7M8.5 1.5l-7 7" stroke="#000" stroke-width="1.6" fill="none"/></svg>
<div style="left:1px;top:589px;width:1071px;height:23px;background:#fff;"></div>
<div style="left:210px;top:589px;width:1px;height:23px;background:#e0e0e0;"></div>
<span class="t b" style="left:88px;top:593px;color:#000;letter-spacing:0.328px;">Name</span>
<div style="left:330px;top:589px;width:1px;height:23px;background:#e0e0e0;"></div>
<span class="t b" style="left:254px;top:593px;color:#000;letter-spacing:-0.072px;">Value</span>
<div style="left:410px;top:589px;width:1px;height:23px;background:#e0e0e0;"></div>
<span class="t b" style="left:356px;top:593px;color:#000;letter-spacing:0.131px;">Start</span>
<div style="left:490px;top:589px;width:1px;height:23px;background:#e0e0e0;"></div>
<span class="t b" style="left:438px;top:593px;color:#000;letter-spacing:-0.254px;">Size</span>
<div style="left:574px;top:589px;width:1px;height:23px;background:#e0e0e0;"></div>
<span class="t b" style="left:517px;top:593px;color:#000;letter-spacing:-0.269px;">Color</span>
<div style="left:784px;top:589px;width:1px;height:23px;background:#e0e0e0;"></div>
<span class="t b" style="left:651px;top:593px;color:#000;letter-spacing:0.094px;">Comment</span>
<div style="left:1px;top:612px;width:783px;height:17px;background:#575757;"></div>
<div style="left:1px;top:628px;width:783px;height:1px;background:#373532;"></div>
<div style="left:210px;top:612px;width:1px;height:17px;background:#373532;"></div>
<div style="left:330px;top:612px;width:1px;height:17px;background:#373532;"></div>
<div style="left:410px;top:612px;width:1px;height:17px;background:#373532;"></div>
<div style="left:490px;top:612px;width:1px;height:17px;background:#373532;"></div>
<div style="left:574px;top:612px;width:1px;height:17px;background:#373532;"></div>
<div style="left:784px;top:612px;width:1px;height:17px;background:#373532;"></div>
<svg style="left:8px;top:615px" width="8" height="11" fill="none" stroke="#6e6d69" stroke-width="1.2"><path d="M1.5 1.5l4 4-4 4"/></svg>
<span class="t" style="left:21px;top:613px;color:#e2e2e2;letter-spacing:-0.550px;">struct IMAGE_DOS_HEADER DosH...</span>
<span class="t" style="left:333px;top:613px;color:#e2e2e2;letter-spacing:-0.501px;">0h</span>
<span class="t" style="left:413px;top:613px;color:#e2e2e2;letter-spacing:-0.501px;">40h</span>
<span class="t" style="left:493px;top:613px;color:#e2e2e2;letter-spacing:-0.448px;">Fg:</span>
<span class="t" style="left:532px;top:613px;color:#e2e2e2;letter-spacing:-0.672px;">Bg:</span>
<div style="left:550px;top:613px;width:19px;height:14px;background:#ffddff;border:1px solid #b8b8b8"></div>
<div style="left:1px;top:629px;width:783px;height:17px;background:#45413d;"></div>
<div style="left:1px;top:645px;width:783px;height:1px;background:#373532;"></div>
<div style="left:210px;top:629px;width:1px;height:17px;background:#373532;"></div>
<div style="left:330px;top:629px;width:1px;height:17px;background:#373532;"></div>
<div style="left:410px;top:629px;width:1px;height:17px;background:#373532;"></div>
<div style="left:490px;top:629px;width:1px;height:17px;background:#373532;"></div>
<div style="left:574px;top:629px;width:1px;height:17px;background:#373532;"></div>
<div style="left:784px;top:629px;width:1px;height:17px;background:#373532;"></div>
<svg style="left:8px;top:632px" width="8" height="11" fill="none" stroke="#6e6d69" stroke-width="1.2"><path d="M1.5 1.5l4 4-4 4"/></svg>
<span class="t" style="left:21px;top:630px;color:#e2e2e2;letter-spacing:-0.554px;">struct IMAGE_DOS_STUB DosStub</span>
<span class="t" style="left:333px;top:630px;color:#e2e2e2;letter-spacing:-0.501px;">40h</span>
<span class="t" style="left:413px;top:630px;color:#e2e2e2;letter-spacing:-0.534px;">E0h</span>
<span class="t" style="left:493px;top:630px;color:#e2e2e2;letter-spacing:-0.448px;">Fg:</span>
<span class="t" style="left:532px;top:630px;color:#e2e2e2;letter-spacing:-0.672px;">Bg:</span>
<div style="left:1px;top:646px;width:783px;height:17px;background:#3c3b37;"></div>
<div style="left:1px;top:662px;width:783px;height:1px;background:#373532;"></div>
<div style="left:210px;top:646px;width:1px;height:17px;background:#373532;"></div>
<div style="left:330px;top:646px;width:1px;height:17px;background:#373532;"></div>
<div style="left:410px;top:646px;width:1px;height:17px;background:#373532;"></div>
<div style="left:490px;top:646px;width:1px;height:17px;background:#373532;"></div>
<div style="left:574px;top:646px;width:1px;height:17px;background:#373532;"></div>
<div style="left:784px;top:646px;width:1px;height:17px;background:#373532;"></div>
<svg style="left:8px;top:649px" width="8" height="11" fill="none" stroke="#6e6d69" stroke-width="1.2"><path d="M1.5 1.5l4 4-4 4"/></svg>
<span class="t" style="left:21px;top:647px;color:#e2e2e2;letter-spacing:-0.496px;">struct IMAGE_NT_HEADERS NtHe...</span>
<span class="t" style="left:333px;top:647px;color:#e2e2e2;letter-spacing:-0.501px;">120h</span>
<span class="t" style="left:413px;top:647px;color:#e2e2e2;letter-spacing:-0.517px;">F8h</span>
<span class="t" style="left:493px;top:647px;color:#e2e2e2;letter-spacing:-0.448px;">Fg:</span>
<span class="t" style="left:532px;top:647px;color:#e2e2e2;letter-spacing:-0.672px;">Bg:</span>
<div style="left:550px;top:647px;width:19px;height:14px;background:#ffddff;border:1px solid #b8b8b8"></div>
<div style="left:1px;top:663px;width:783px;height:17px;background:#45413d;"></div>
<div style="left:1px;top:679px;width:783px;height:1px;background:#373532;"></div>
<div style="left:210px;top:663px;width:1px;height:17px;background:#373532;"></div>
<div style="left:330px;top:663px;width:1px;height:17px;background:#373532;"></div>
<div style="left:410px;top:663px;width:1px;height:17px;background:#373532;"></div>
<div style="left:490px;top:663px;width:1px;height:17px;background:#373532;"></div>
<div style="left:574px;top:663px;width:1px;height:17px;background:#373532;"></div>
<div style="left:784px;top:663px;width:1px;height:17px;background:#373532;"></div>
<svg style="left:8px;top:666px" width="8" height="11" fill="none" stroke="#6e6d69" stroke-width="1.2"><path d="M1.5 1.5l4 4-4 4"/></svg>
<span class="t" style="left:21px;top:664px;color:#e2e2e2;letter-spacing:-0.625px;">struct IMAGE_SECTION_HEADER ...</span>
<span class="t" style="left:333px;top:664px;color:#e2e2e2;letter-spacing:-0.501px;">218h</span>
<span class="t" style="left:413px;top:664px;color:#e2e2e2;letter-spacing:-0.501px;">140h</span>
<span class="t" style="left:493px;top:664px;color:#e2e2e2;letter-spacing:-0.448px;">Fg:</span>
<span class="t" style="left:532px;top:664px;color:#e2e2e2;letter-spacing:-0.672px;">Bg:</span>
<div style="left:550px;top:664px;width:19px;height:14px;background:#dcdcdc;border:1px solid #b8b8b8"></div>
<div style="left:1px;top:680px;width:783px;height:17px;background:#3c3b37;"></div>
<div style="left:1px;top:696px;width:783px;height:1px;background:#373532;"></div>
<div style="left:210px;top:680px;width:1px;height:17px;background:#373532;"></div>
<div style="left:330px;top:680px;width:1px;height:17px;background:#373532;"></div>
<div style="left:410px;top:680px;width:1px;height:17px;background:#373532;"></div>
<div style="left:490px;top:680px;width:1px;height:17px;background:#373532;"></div>
<div style="left:574px;top:680px;width:1px;height:17px;background:#373532;"></div>
<div style="left:784px;top:680px;width:1px;height:17px;background:#373532;"></div>
<svg style="left:8px;top:683px" width="8" height="11" fill="none" stroke="#6e6d69" stroke-width="1.2"><path d="M1.5 1.5l4 4-4 4"/></svg>
<span class="t" style="left:21px;top:681px;color:#e2e2e2;letter-spacing:-0.488px;">struct IMAGE_SECTION_DATA Sec...</span>
<span class="t" style="left:213px;top:681px;color:#e2e2e2;letter-spacing:-0.340px;">.text</span>
<span class="t" style="left:333px;top:681px;color:#e2e2e2;letter-spacing:-0.501px;">400h</span>
<span class="t" style="left:413px;top:681px;color:#e2e2e2;letter-spacing:-0.501px;">172000h</span>
<span class="t" style="left:493px;top:681px;color:#e2e2e2;letter-spacing:-0.448px;">Fg:</span>
<span class="t" style="left:532px;top:681px;color:#e2e2e2;letter-spacing:-0.672px;">Bg:</span>
<div style="left:1px;top:697px;width:783px;height:17px;background:#45413d;"></div>
<div style="left:1px;top:713px;width:783px;height:1px;background:#373532;"></div>
<div style="left:210px;top:697px;width:1px;height:17px;background:#373532;"></div>
<div style="left:330px;top:697px;width:1px;height:17px;background:#373532;"></div>
<div style="left:410px;top:697px;width:1px;height:17px;background:#373532;"></div>
<div style="left:490px;top:697px;width:1px;height:17px;background:#373532;"></div>
<div style="left:574px;top:697px;width:1px;height:17px;background:#373532;"></div>
<div style="left:784px;top:697px;width:1px;height:17px;background:#373532;"></div>
<svg style="left:8px;top:700px" width="8" height="11" fill="none" stroke="#6e6d69" stroke-width="1.2"><path d="M1.5 1.5l4 4-4 4"/></svg>
<span class="t" style="left:21px;top:698px;color:#e2e2e2;letter-spacing:-0.488px;">struct IMAGE_SECTION_DATA Sec...</span>
<span class="t" style="left:213px;top:698px;color:#e2e2e2;letter-spacing:-0.384px;">.rdata</span>
<span class="t" style="left:333px;top:698px;color:#e2e2e2;letter-spacing:-0.501px;">172400h</span>
<span class="t" style="left:413px;top:698px;color:#e2e2e2;letter-spacing:-0.526px;">50C00h</span>
<span class="t" style="left:493px;top:698px;color:#e2e2e2;letter-spacing:-0.448px;">Fg:</span>
<span class="t" style="left:532px;top:698px;color:#e2e2e2;letter-spacing:-0.672px;">Bg:</span>
<div style="left:1px;top:714px;width:783px;height:17px;background:#3c3b37;"></div>
<div style="left:1px;top:730px;width:783px;height:1px;background:#373532;"></div>
<div style="left:210px;top:714px;width:1px;height:17px;background:#373532;"></div>
<div style="left:330px;top:714px;width:1px;height:17px;background:#373532;"></div>
<div style="left:410px;top:714px;width:1px;height:17px;background:#373532;"></div>
<div style="left:490px;top:714px;width:1px;height:17px;background:#373532;"></div>
<div style="left:574px;top:714px;width:1px;height:17px;background:#373532;"></div>
<div style="left:784px;top:714px;width:1px;height:17px;background:#373532;"></div>
<svg style="left:8px;top:717px" width="8" height="11" fill="none" stroke="#6e6d69" stroke-width="1.2"><path d="M1.5 1.5l4 4-4 4"/></svg>
<span class="t" style="left:21px;top:715px;color:#e2e2e2;letter-spacing:-0.488px;">struct IMAGE_SECTION_DATA Sec...</span>
<span class="t" style="left:213px;top:715px;color:#e2e2e2;letter-spacing:-0.401px;">.data</span>
<span class="t" style="left:333px;top:715px;color:#e2e2e2;letter-spacing:-0.522px;">1C3000h</span>
<span class="t" style="left:413px;top:715px;color:#e2e2e2;letter-spacing:-0.531px;">5C00h</span>
<span class="t" style="left:493px;top:715px;color:#e2e2e2;letter-spacing:-0.448px;">Fg:</span>
<span class="t" style="left:532px;top:715px;color:#e2e2e2;letter-spacing:-0.672px;">Bg:</span>
<div style="left:1px;top:731px;width:783px;height:17px;background:#45413d;"></div>
<div style="left:1px;top:747px;width:783px;height:1px;background:#373532;"></div>
<div style="left:210px;top:731px;width:1px;height:17px;background:#373532;"></div>
<div style="left:330px;top:731px;width:1px;height:17px;background:#373532;"></div>
<div style="left:410px;top:731px;width:1px;height:17px;background:#373532;"></div>
<div style="left:490px;top:731px;width:1px;height:17px;background:#373532;"></div>
<div style="left:574px;top:731px;width:1px;height:17px;background:#373532;"></div>
<div style="left:784px;top:731px;width:1px;height:17px;background:#373532;"></div>
<svg style="left:8px;top:734px" width="8" height="11" fill="none" stroke="#6e6d69" stroke-width="1.2"><path d="M1.5 1.5l4 4-4 4"/></svg>
<span class="t" style="left:21px;top:732px;color:#e2e2e2;letter-spacing:-0.488px;">struct IMAGE_SECTION_DATA Sec...</span>
<span class="t" style="left:213px;top:732px;color:#e2e2e2;letter-spacing:-0.359px;">.gfids</span>
<span class="t" style="left:333px;top:732px;color:#e2e2e2;letter-spacing:-0.543px;">1C8C00h</span>
<span class="t" style="left:413px;top:732px;color:#e2e2e2;letter-spacing:-0.542px;">1AC00h</span>
<span class="t" style="left:493px;top:732px;color:#e2e2e2;letter-spacing:-0.448px;">Fg:</span>
<span class="t" style="left:532px;top:732px;color:#e2e2e2;letter-spacing:-0.672px;">Bg:</span>
<div style="left:1px;top:748px;width:783px;height:17px;background:#3c3b37;"></div>
<div style="left:1px;top:764px;width:783px;height:1px;background:#373532;"></div>
<div style="left:210px;top:748px;width:1px;height:17px;background:#373532;"></div>
<div style="left:330px;top:748px;width:1px;height:17px;background:#373532;"></div>
<div style="left:410px;top:748px;width:1px;height:17px;background:#373532;"></div>
<div style="left:490px;top:748px;width:1px;height:17px;background:#373532;"></div>
<div style="left:574px;top:748px;width:1px;height:17px;background:#373532;"></div>
<div style="left:784px;top:748px;width:1px;height:17px;background:#373532;"></div>
<svg style="left:8px;top:751px" width="8" height="11" fill="none" stroke="#6e6d69" stroke-width="1.2"><path d="M1.5 1.5l4 4-4 4"/></svg>
<span class="t" style="left:21px;top:749px;color:#e2e2e2;letter-spacing:-0.488px;">struct IMAGE_SECTION_DATA Sec...</span>
<span class="t" style="left:213px;top:749px;color:#e2e2e2;letter-spacing:-0.359px;">.giats</span>
<span class="t" style="left:333px;top:749px;color:#e2e2e2;letter-spacing:-0.515px;">1E3800h</span>
<span class="t" style="left:413px;top:749px;color:#e2e2e2;letter-spacing:-0.501px;">200h</span>
<span class="t" style="left:493px;top:749px;color:#e2e2e2;letter-spacing:-0.448px;">Fg:</span>
<span class="t" style="left:532px;top:749px;color:#e2e2e2;letter-spacing:-0.672px;">Bg:</span>
<div style="left:1072px;top:589px;width:16px;height:177px;background:#f0f0f0;"></div>
<div style="left:1072px;top:606px;width:15px;height:41px;background:#cdcdcd;"></div>
<svg style="left:1072px;top:589px" width="16" height="177" fill="none" stroke="#555" stroke-width="2"><path d="M4.5 11l3.5-3.5L11.500 11"/><path d="M4.5 166l3.5 3.5 3.5-3.5"/></svg>
<div style="left:1px;top:769px;width:1346px;height:19px;background:#b9d1ea;"></div>
<span class="t" style="left:4px;top:771px;color:#000;letter-spacing:-0.725px;">Find Results</span>
<svg style="left:1317px;top:773px" width="32" height="12"><path d="M1 3.5h8L5 8z" fill="#000"/><path d="M18 1.5l7 7M25 1.5l-7 7" stroke="#000" stroke-width="1.6" fill="none"/></svg>
<div style="left:5px;top:793px;width:27px;height:180px;background:#6e6e6e;border:1px solid #c8c8c8;border-top:none"></div>
<div style="left:3px;top:791px;width:1px;height:5px;background:#c8c8c8;"></div>
<div style="left:33px;top:791px;width:1px;height:5px;background:#c8c8c8;"></div>
<div style="left:4px;top:793px;width:29px;height:1px;background:#c8c8c8;"></div>
<div style="left:6px;top:793px;width:25px;height:1px;background:#f0e000;"></div>
<div style="left:37px;top:788px;width:1310px;height:23px;background:#fff;"></div>
<div style="left:136px;top:788px;width:1px;height:23px;background:#e0e0e0;"></div>
<div style="left:737px;top:788px;width:1px;height:23px;background:#e0e0e0;"></div>
<span class="t b" style="left:65px;top:792px;color:#000;letter-spacing:-0.433px;">Address</span>
<span class="t b" style="left:421px;top:792px;color:#000;letter-spacing:-0.072px;">Value</span>
<div style="left:37px;top:811px;width:700px;height:15px;background:#6f6f6f;"></div>
<span class="t" style="left:40px;top:811px;color:#fff;letter-spacing:-0.260px;">Found 1 occurrences of &#x27;85 C0 74 3C 68&#x27;.</span>
<div style="left:38px;top:826px;width:699px;height:14px;background:#246ab0;"></div>
<div style="left:136px;top:826px;width:1px;height:14px;background:#3c3b37;"></div>
<div style="left:38px;top:826px;width:98px;height:1px;background:repeating-linear-gradient(90deg,#e8a060 0 1px,#246ab0 1px 2px)"></div>
<span class="t" style="left:41px;top:826px;color:#fff;letter-spacing:-0.875px;">1C01h</span>
<span class="t" style="left:140px;top:826px;color:#fff;letter-spacing:-0.576px;">85 C0 74 3C 68</span>
<span class="t" style="left:1px;top:980px;color:#e2e2e2;letter-spacing:-1.688px;">1</span>
<div style="left:1px;top:995px;width:1346px;height:2px;background:#9c9c9c;"></div>
<div style="left:70px;top:997px;width:93px;height:22px;background:#838383;"></div>
<span class="t" style="left:28px;top:1001px;color:#e2e2e2;letter-spacing:-0.339px;">Output</span>
<span class="t" style="left:96px;top:1001px;color:#000;letter-spacing:-0.725px;">Find Results</span>
<span class="t" style="left:189px;top:1001px;color:#e2e2e2;letter-spacing:-0.745px;">Find in Files</span>
<span class="t" style="left:279px;top:1001px;color:#e2e2e2;letter-spacing:-0.908px;">Compare</span>
<span class="t" style="left:357px;top:1001px;color:#e2e2e2;letter-spacing:-0.743px;">Histogram</span>
<span class="t" style="left:440px;top:1001px;color:#e2e2e2;letter-spacing:-1.086px;">Checksum</span>
<span class="t" style="left:523px;top:1001px;color:#e2e2e2;letter-spacing:-0.908px;">Process</span>
<span class="t" style="left:5px;top:1022px;color:#e2e2e2;letter-spacing:-0.242px;">Found 1 occurrences of &#x27;85 C0 74 3C 68&#x27;. (press Esc to hide results)</span>
<div style="left:799px;top:1021px;width:1px;height:15px;background:#b8b8b8;"></div>
<div style="left:938px;top:1021px;width:1px;height:15px;background:#b8b8b8;"></div>
<div style="left:1066px;top:1021px;width:1px;height:15px;background:#b8b8b8;"></div>
<div style="left:1142px;top:1021px;width:1px;height:15px;background:#b8b8b8;"></div>
<div style="left:1214px;top:1021px;width:1px;height:15px;background:#b8b8b8;"></div>
<div style="left:1251px;top:1021px;width:1px;height:15px;background:#b8b8b8;"></div>
<div style="left:1277px;top:1021px;width:1px;height:15px;background:#b8b8b8;"></div>
<div style="left:1297px;top:1021px;width:1px;height:15px;background:#b8b8b8;"></div>
<div style="left:1329px;top:1021px;width:1px;height:15px;background:#b8b8b8;"></div>
<span class="t" style="left:803px;top:1022px;color:#e2e2e2;letter-spacing:-0.320px;">Start: 7169 [1C01h]</span>
<span class="t" style="left:942px;top:1022px;color:#e2e2e2;letter-spacing:-0.277px;">Sel: 5 [5h]</span>
<span class="t" style="left:1070px;top:1022px;color:#e2e2e2;letter-spacing:-0.672px;">Size: 3561984</span>
<span class="t" style="left:1147px;top:1022px;color:#e2e2e2;letter-spacing:-0.504px;">ANSI</span>
<span class="t" style="left:1255px;top:1022px;color:#e2e2e2;letter-spacing:-0.781px;">LIT</span>
<span class="t" style="left:1281px;top:1022px;color:#e2e2e2;letter-spacing:-0.328px;">W</span>
<span class="t" style="left:1302px;top:1022px;color:#e2e2e2;letter-spacing:-1.339px;">OVR</span>
<svg style="left:1335px;top:1027px" width="10" height="10" fill="#b0b0b0"><rect x="6" y="0" width="2" height="2"/><rect x="3" y="3" width="2" height="2"/><rect x="6" y="3" width="2" height="2"/><rect x="0" y="6" width="2" height="2"/><rect x="3" y="6" width="2" height="2"/><rect x="6" y="6" width="2" height="2"/></svg>
<svg style="left:1088px;top:100px" width="260" height="330" viewBox="1088 100 260 330"><path d="M1094.5 116.5v-11h3.5l1.5 2h6v3" fill="#fbeaa0" stroke="#eac75a"/><path d="M1094.5 116.5l5-6.5h9.5l-5.5 6.5z" fill="#fbeaa0" stroke="#eac75a"/><path d="M1107.5 118.5h7l3 3v10h-10z" fill="#fbfcff" stroke="#aebde6"/><path d="M1114.5 118.5v3h3" fill="#e6ebfa" stroke="#aebde6"/><path d="M1094.5 148.5v-11h3.5l1.5 2h6v3" fill="#fbeaa0" stroke="#eac75a"/><path d="M1094.5 148.5l5-6.5h9.5l-5.5 6.5z" fill="#fbeaa0" stroke="#eac75a"/><path d="M1105 132.5l1.400 3.300 3.600.3-2.700 2.400.8 3.5-3.100-1.900-3.100 1.900.8-3.5-2.700-2.400 3.600-.3z" fill="#6cabea"/><path d="M1094.5 164.5v-11h3.5l1.5 2h6v3" fill="#fbeaa0" stroke="#eac75a"/><path d="M1094.5 164.5l5-6.5h9.5l-5.5 6.5z" fill="#fbeaa0" stroke="#eac75a"/><circle cx="1104.5" cy="154.5" r="4.800" fill="#fbfcff" stroke="#c9d3ee" stroke-width=".8"/><path d="M1104.5 154.5l2-2.5M1102 152.5l.8.800M1104.5 151v1M1107.5 155h-1" stroke="#8fa4d0" stroke-width=".9" fill="none"/><path d="M1102.5 166.5h7v13.5l-3.5-3-3.5 3z" fill="#fbeaa0" stroke="#eac75a"/><path d="M1094.5 180.5v-11h3.5l1.5 2h6v3" fill="#fbeaa0" stroke="#eac75a"/><path d="M1094.5 180.5l5-6.5h9.5l-5.5 6.5z" fill="#fbeaa0" stroke="#eac75a"/><g fill="#fbfcff" stroke="#c4cbe0" stroke-width=".8"><path d="M1106.5 409.5h5l2 2v7h-7z"/><path d="M1103.5 411.5h5l2 2v7h-7z"/><path d="M1100.5 413.5h5l2 2v7h-7z"/></g><path d="M1186.5 422.5v-10h3.5l1.5 2h6v3" fill="#fbeaa0" stroke="#eac75a"/><path d="M1186.5 422.5l5-6.5h9.5l-5.5 6.5z" fill="#fbeaa0" stroke="#eac75a"/></svg>
<svg style="left:1088px;top:743px" width="260" height="24" viewBox="1088 743 260 24"><path d="M1105 746.5l-6 8.5h4l-3.5 6.5 8.5-9h-4.5l4-6z" fill="#fbeaa0" stroke="#eac75a" stroke-width=".6"/><rect x="1180" y="747" width="5" height="5" fill="#fbeaa0" stroke="#eac75a" stroke-width=".8"/><rect x="1187" y="751.5" width="5" height="5" fill="#fbeaa0" stroke="#eac75a" stroke-width=".8"/><rect x="1187" y="758" width="5" height="4" fill="#fbeaa0" stroke="#eac75a" stroke-width=".8"/><path d="M1182.5 753v7.5h4M1182.5 754.5h4" stroke="#6cabea" stroke-width="1" stroke-dasharray="1 1" fill="none"/><path d="M1260.5 747.5h6v13l-3-2.5-3 2.5z" fill="#fbeaa0" stroke="#eac75a" stroke-width=".8"/></svg>
<svg style="left:0;top:997px" width="540" height="22" viewBox="0 997 540 22"><path d="M9 1003.800h12M10.5 1006.800h7M9 1009.800h12M11.5 1012.800h7" stroke="#6cabea" stroke-width="1.400" fill="none"/><path d="M76 1010.5h5M76 1012.5h5M76 1014.5h5" stroke="#6cabea" stroke-width="1" fill="none" shape-rendering="crispEdges"/><path d="M86 1008.5l5.5 5" stroke="#fbeaa0" stroke-width="2.400" stroke-linecap="round"/><circle cx="82.5" cy="1005" r="4.600" fill="#fbfcff" stroke="#aebde6" stroke-width="1"/><path d="M168 1010.5h5M168 1012.5h5M168 1014.5h5" stroke="#6cabea" stroke-width="1" fill="none" shape-rendering="crispEdges"/><path d="M175.5 1010.5v-10h3.5l1.5 2h5l-1 4 1 4z" fill="#fbeaa0" stroke="#eac75a" stroke-width=".8"/><path d="M178 1009l5.5 5" stroke="#fbeaa0" stroke-width="2.200" stroke-linecap="round"/><circle cx="174.5" cy="1005.5" r="4.300" fill="#fbfcff" stroke="#aebde6" stroke-width="1"/><path d="M260 1011.5h5M260 1013.5h5M260 1015.5h5" stroke="#6cabea" stroke-width="1" fill="none" shape-rendering="crispEdges"/><text x="261.5" y="1015.5" font-family="Liberation Sans" font-weight="bold" font-size="18" fill="#fbeaa0" stroke="#eac75a" stroke-width=".5">?</text><path d="M337 1011.5h5M337 1013.5h5M337 1015.5h5" stroke="#6cabea" stroke-width="1" fill="none" shape-rendering="crispEdges"/><path d="M341.5 1000v14.5H353" fill="none" stroke="#fbeaa0" stroke-width="2"/><path d="M343.5 1013v-3M344.5 1013v-6M345.5 1013v-9M346.5 1013v-11M347.5 1013v-8M348.5 1013v-5M349.5 1013v-7M350.5 1013v-5M351.5 1013v-3" stroke="#6cabea" stroke-width="1" fill="none"/><path d="M420 1011.5h5M420 1013.5h5M420 1015.5h5" stroke="#6cabea" stroke-width="1" fill="none" shape-rendering="crispEdges"/><path d="M425.5 1001h10.5v3h-6l4.5 4.200-4.5 4.300h6v3h-10.5v-2.5l5-4.800-5-4.700z" fill="#6cabea"/><path d="M503 1011.5h5M503 1013.5h5M503 1015.5h5" stroke="#6cabea" stroke-width="1" fill="none" shape-rendering="crispEdges"/><path d="M508 1007l3.5-5h9.5l-3.5 5z" fill="#5f8fd8"/><path d="M508 1007h9.5v3h-9.5z" fill="#4f7cc4"/><path d="M509.5 1010v3M512 1010v3M514.5 1010v3M517 1010v2M518.5 1006.5v3M520 1004.5v3" stroke="#8fb4ea" stroke-width="1" fill="none"/></svg>
<svg style="left:8px;top:8px" width="18" height="16" viewBox="8 8 18 16"><path d="M9.5 11.5c3-1.500 6-2.300 8-2.300 3.500 0 5 3 6.800 9.300-3 2.300-5.800 3.300-8.800 3.300-3 0-4.500-3-6-10.300z" fill="#ffab00"/><path d="M10 12.300l13 6.400c-2.500 1.800-5 2.600-7.500 2.600-2.600 0-4-2.800-5.500-9z" fill="#ffd822" fill-opacity=".85"/><path d="M12.500 10.800c2-.8 3.600-1.100 5-1.100 3 0 4.300 2.500 5.800 7.500z" fill="#ff7410" fill-opacity=".8"/><ellipse cx="16.500" cy="10.800" rx="3.500" ry="1.200" fill="#fff" fill-opacity=".4"/><path d="M11.500 12.300l11 5.200" stroke="#f0e000" stroke-width="1.300"/><path d="M11.500 12l11 5.200" stroke="#5a4a10" stroke-width=".5" stroke-dasharray="1.200 .8"/><circle cx="20.500" cy="16.500" r=".8" fill="#222a50"/></svg>
</body></html>
